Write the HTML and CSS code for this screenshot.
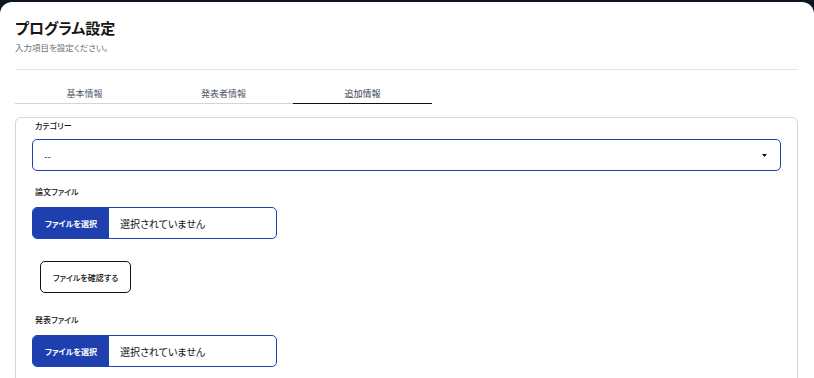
FILE: index.html
```html
<!DOCTYPE html>
<html lang="ja">
<head>
<meta charset="utf-8">
<title>プログラム設定</title>
<link rel="stylesheet" href="styles.css">
</head>
<body>
<div class="panel">
  <h1 class="title">プログラム設定</h1>
  <p class="subtitle">入力項目を設定ください。</p>
  <hr class="divider">
  <div class="tabs">
    <div class="tab">基本情報</div>
    <div class="tab">発表者情報</div>
    <div class="tab active">追加情報</div>
  </div>
  <div class="card">
    <div class="label label-first">カテゴリー</div>
    <div class="select">
      <span class="select-value">--</span>
      <svg class="caret" width="5" height="3" viewBox="0 0 5 3"><path d="M0 0H5L2.5 3Z" fill="#111"/></svg>
    </div>
    <div class="label label-file">論文ファイル</div>
    <div class="file">
      <span class="file-btn">ファイルを選択</span>
      <span class="file-name">選択されていません</span>
    </div>
    <button class="check-btn">ファイルを確認する</button>
    <div class="label label-file2">発表ファイル</div>
    <div class="file">
      <span class="file-btn">ファイルを選択</span>
      <span class="file-name">選択されていません</span>
    </div>
  </div>
</div>
</body>
</html>
```
FILE: styles.css
```css
html, body {
  margin: 0;
  padding: 0;
  height: 100%;
  overflow: hidden;
}
body {
  background: #0e1522;
  font-family: "Noto Sans CJK JP", "Noto Sans", sans-serif;
  font-feature-settings: "palt";
  color: #111;
}
.panel {
  margin-top: 2px;
  background: #fff;
  border-radius: 12px 12px 0 0;
  padding: 15px 16px 0 15px;
  height: 400px;
}
.title {
  margin: 0;
  font-size: 15px;
  line-height: 22px;
  font-weight: 700;
  color: #161616;
}
.subtitle {
  margin: 2px 0 0;
  font-size: 8.5px;
  line-height: 12px;
  color: #6b7280;
}
.divider {
  margin: 16px 0 0;
  border: 0;
  border-top: 1px solid #e3e5e8;
  height: 0;
}
.tabs {
  display: flex;
  margin-top: 18px;
}
.tab {
  width: 139px;
  text-align: center;
  font-size: 9px;
  line-height: 12px;
  color: #4b5563;
  padding-bottom: 3px;
  border-bottom: 1px solid #d1d5db;
}
.tab.active {
  color: #374151;
  border-bottom: 1.5px solid #111;
}
.card {
  margin-top: 13px;
  border: 1px solid #cfd8e3;
  border-radius: 6px;
  padding: 2px 16px 20px 16px;
  display: flex;
  flex-direction: column;
  align-items: flex-start;
}
.label {
  font-size: 8px;
  line-height: 12px;
  font-weight: 500;
  color: #111;
  padding-left: 3px;
}
.label-first { margin-top: 0; }
.label-file { margin-top: 15px; }
.label-file2 { margin-top: 21px; }
.select {
  margin-top: 7px;
  align-self: stretch;
  height: 32px;
  box-sizing: border-box;
  border: 1.5px solid #1e40af;
  border-radius: 5px;
  display: flex;
  align-items: center;
  justify-content: space-between;
  padding: 0 13px 0 11px;
}
.select-value {
  font-size: 10px;
  color: #333;
}
.caret { display: block; }
.file {
  margin-top: 9px;
  width: 245px;
  height: 32px;
  box-sizing: border-box;
  border: 1.5px solid #1e40af;
  border-radius: 5px;
  display: flex;
  align-items: stretch;
  overflow: hidden;
}
.file-btn {
  width: 76px;
  background: #1e40af;
  color: #fff;
  font-size: 8px;
  font-weight: 700;
  display: flex;
  align-items: center;
  justify-content: center;
}
.file-name {
  display: flex;
  align-items: center;
  padding-left: 11px;
  font-size: 10px;
  color: #111;
}
.check-btn {
  margin: 22px 0 0 8px;
  width: 91px;
  height: 32px;
  box-sizing: border-box;
  border: 1px solid #111;
  border-radius: 5px;
  background: #fff;
  font-family: inherit;
  font-feature-settings: "palt";
  font-size: 8px;
  font-weight: 500;
  color: #111;
  padding: 0;
}
```
